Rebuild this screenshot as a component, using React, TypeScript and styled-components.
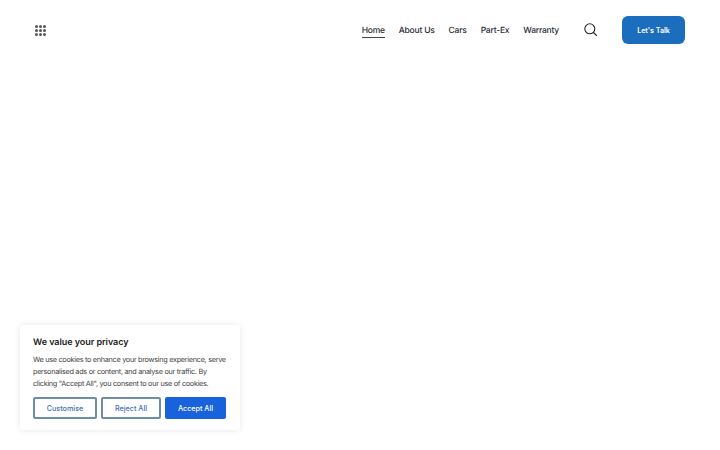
import React from "react";
import styled, { createGlobalStyle } from "styled-components";

const GlobalStyle = createGlobalStyle`
  html, body {
    margin: 0;
    padding: 0;
    background: #fff;
    font-family: Inter, "Open Sans", sans-serif;
    text-rendering: geometricPrecision;
  }
  * {
    box-sizing: border-box;
  }
`;

const Page = styled.div`
  width: 720px;
  height: 450px;
  overflow: hidden;
  position: relative;
  background: #fff;
`;

const Header = styled.header`
  display: flex;
  align-items: center;
  padding: 16px 35px 0 35px;
  height: 44px;
`;

const MenuGrid = styled.div`
  display: grid;
  grid-template-columns: repeat(3, 3px);
  gap: 1px;
  width: 11px;
  margin-right: auto;
`;

const Dot = styled.span`
  width: 3px;
  height: 3px;
  border-radius: 50%;
  background: #555;
`;

const Nav = styled.nav`
  display: flex;
  gap: 14px;
  margin-right: 25px;
`;

const NavLink = styled.a<{ $active?: boolean }>`
  font-size: 8.5px;
  line-height: 11px;
  letter-spacing: -0.22px;
  font-weight: 500;
  color: #2a2d36;
  padding-bottom: 0;
  border-bottom: 1px solid ${(p) => (p.$active ? "#444" : "transparent")};
  margin-top: 3px;
`;

const SearchButton = styled.button`
  display: flex;
  padding: 0;
  border: 0;
  background: none;
  margin-right: 25px;
  margin-top: -1px;
`;

const TalkButton = styled.button`
  width: 63px;
  height: 28px;
  border: 0;
  border-radius: 6px;
  background: #1b6ebd;
  color: #fff;
  font-family: inherit;
  font-size: 7.2px;
  font-weight: 600;
  letter-spacing: -0.05px;
  padding: 1px 0 0;
`;

const CookieBanner = styled.section`
  position: absolute;
  left: 20px;
  top: 325px;
  width: 220px;
  height: 105px;
  padding: 12px 13px;
  background: #fff;
  border-radius: 3px;
  box-shadow: 0 0 6px rgba(0, 0, 0, 0.1);
`;

const CookieTitle = styled.h2`
  margin: 0 0 5px;
  font-size: 9px;
  line-height: 12px;
  letter-spacing: -0.05px;
  font-weight: 600;
  color: #212121;
`;

const CookieText = styled.p`
  margin: 0 0 7px;
  font-size: 7.3px;
  line-height: 12px;
  letter-spacing: -0.3px;
  color: #3f3f3f;
  white-space: nowrap;
`;

const CookieActions = styled.div`
  display: flex;
  gap: 4px;
`;

const CookieButton = styled.button<{ $primary?: boolean; $width: number }>`
  width: ${(p) => p.$width}px;
  height: 22px;
  padding: 0;
  border-radius: 2px;
  border: 2px solid ${(p) => (p.$primary ? "#1863dc" : "#6d8cab")};
  background: ${(p) => (p.$primary ? "#1863dc" : "#fff")};
  color: ${(p) => (p.$primary ? "#fff" : "#3f6fb5")};
  font-family: inherit;
  font-size: 7.2px;
  font-weight: 500;
`;

const dots = Array.from({ length: 9 });

export default function App() {
  return (
    <Page>
      <GlobalStyle />
      <Header>
        <MenuGrid>
          {dots.map((_, i) => (
            <Dot key={i} />
          ))}
        </MenuGrid>
        <Nav>
          <NavLink $active>Home</NavLink>
          <NavLink>About Us</NavLink>
          <NavLink>Cars</NavLink>
          <NavLink>Part-Ex</NavLink>
          <NavLink>Warranty</NavLink>
        </Nav>
        <SearchButton aria-label="Search">
          <svg width="13" height="13" viewBox="0 0 13 13" fill="none" stroke="#23262f" strokeWidth="1.1">
            <circle cx="5.8" cy="5.8" r="5" />
            <path d="M9.5 9.5l3 3" strokeLinecap="round" />
          </svg>
        </SearchButton>
        <TalkButton>Let's Talk</TalkButton>
      </Header>
      <CookieBanner>
        <CookieTitle>We value your privacy</CookieTitle>
        <CookieText>
          We use cookies to enhance your browsing experience, serve
          <br />
          personalised ads or content, and analyse our traffic. By
          <br />
          clicking "Accept All", you consent to our use of cookies.
        </CookieText>
        <CookieActions>
          <CookieButton $width={64}>Customise</CookieButton>
          <CookieButton $width={60}>Reject All</CookieButton>
          <CookieButton $width={61} $primary>
            Accept All
          </CookieButton>
        </CookieActions>
      </CookieBanner>
    </Page>
  );
}
